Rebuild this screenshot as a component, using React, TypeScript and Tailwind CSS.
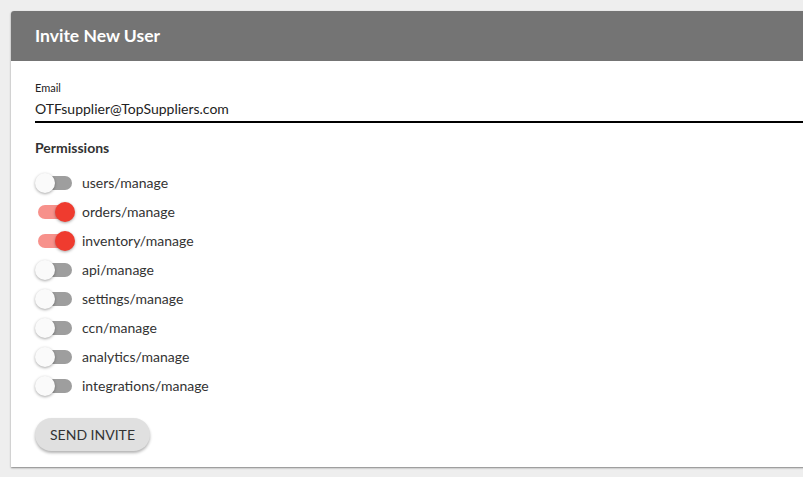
const permissions = [
  { name: "users/manage", on: false },
  { name: "orders/manage", on: true },
  { name: "inventory/manage", on: true },
  { name: "api/manage", on: false },
  { name: "settings/manage", on: false },
  { name: "ccn/manage", on: false },
  { name: "analytics/manage", on: false },
  { name: "integrations/manage", on: false },
];

function Toggle({ on }: { on: boolean }) {
  return (
    <div className="relative w-[40px] h-[20px] flex items-center shrink-0">
      <div
        className={`ml-[3px] w-[34px] h-[14px] rounded-full ${
          on ? "bg-[#f7918b]" : "bg-[#9e9e9e]"
        }`}
      />
      <div
        className={`absolute top-0 w-[20px] h-[20px] rounded-full shadow-[0_1px_3px_rgba(0,0,0,0.35)] ${
          on ? "left-[20px] bg-[#ef3b2f]" : "left-0 bg-[#fafafa]"
        }`}
      />
    </div>
  );
}

export default function App() {
  return (
    <div
      className="w-[803px] h-[477px] overflow-hidden bg-[#eeeeee] pt-[11px] pl-[11px]"
      style={{ fontFamily: "Lato, 'Noto Sans', sans-serif" }}
    >
      <div className="w-[820px] bg-white rounded-t-[3px] shadow-[0_1px_2px_rgba(0,0,0,0.45)]">
        <div className="h-[50px] bg-[#747474] rounded-t-[3px] flex items-center px-[24px]">
          <h1 className="text-white text-[17.5px] font-bold">Invite New User</h1>
        </div>
        <div className="pl-[24px] pt-[20px] pb-[16px]">
          <div className="text-[11px] leading-[14px] text-[#222]">Email</div>
          <div className="mt-[4px] border-b-2 border-black text-[14px] leading-[20px] text-[#222] pb-[2px]">
            OTFsupplier@TopSuppliers.com
          </div>
          <div className="mt-[15px] text-[14px] font-bold text-[#333] leading-[20px]">
            Permissions
          </div>
          <div className="mt-[15px] flex flex-col gap-[9px]">
            {permissions.map((p) => (
              <div key={p.name} className="flex items-center gap-[7px]">
                <Toggle on={p.on} />
                <span className="text-[14px] text-[#333] leading-[20px]">
                  {p.name}
                </span>
              </div>
            ))}
          </div>
          <button className="mt-[22px] w-[115px] h-[33px] rounded-full bg-[#e0e0e0] text-[14px] text-[#333] shadow-[0_2px_3px_rgba(0,0,0,0.3)]">
            SEND INVITE
          </button>
        </div>
      </div>
    </div>
  );
}
